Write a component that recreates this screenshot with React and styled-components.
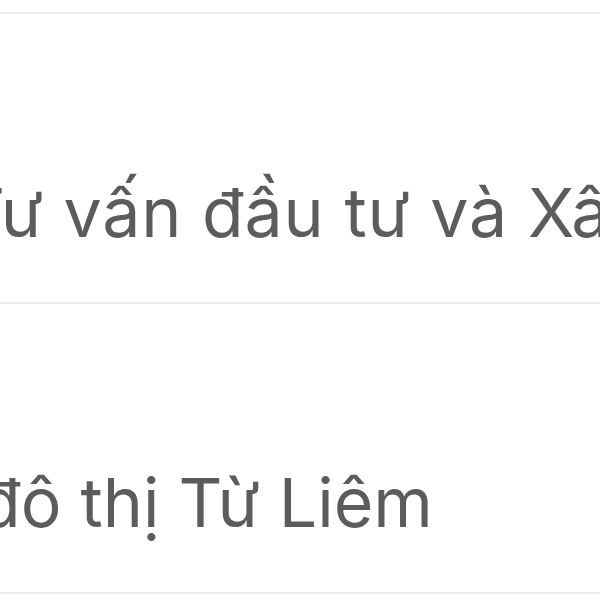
import React from 'react';
import styled, { createGlobalStyle } from 'styled-components';

const GlobalStyle = createGlobalStyle`
  html, body {
    margin: 0;
    padding: 0;
    background: #ffffff;
    overflow: hidden;
  }
`;

const List = styled.div`
  width: 600px;
  height: 600px;
  padding-top: 12px;
  box-sizing: border-box;
  overflow: hidden;
  background: #ffffff;
`;

const Row = styled.div`
  height: 290px;
  box-sizing: border-box;
  border-top: 2px solid #ececec;
  display: flex;
  flex-direction: column;
  justify-content: flex-end;
  padding-bottom: 48px;
  overflow: hidden;
`;

const Label = styled.span`
  font-family: Inter, "Liberation Sans", sans-serif;
  font-size: 68px;
  line-height: 84px;
  color: #5c5c5c;
  white-space: nowrap;
  letter-spacing: ${(props) => props.spacing || 0}px;
  margin-left: ${(props) => props.offset}px;
`;

const rows = [
  { text: 'Tư vấn đầu tư và Xây dựng', offset: -39, spacing: 0.8 },
  { text: 'đô thị Từ Liêm', offset: -21, spacing: 0 },
  { text: '', offset: 0, spacing: 0 },
];

const App = () => (
  <>
    <GlobalStyle />
    <List>
      {rows.map((row, index) => (
        <Row key={index}>
          <Label offset={row.offset} spacing={row.spacing}>
            {row.text}
          </Label>
        </Row>
      ))}
    </List>
  </>
);

export default App;
